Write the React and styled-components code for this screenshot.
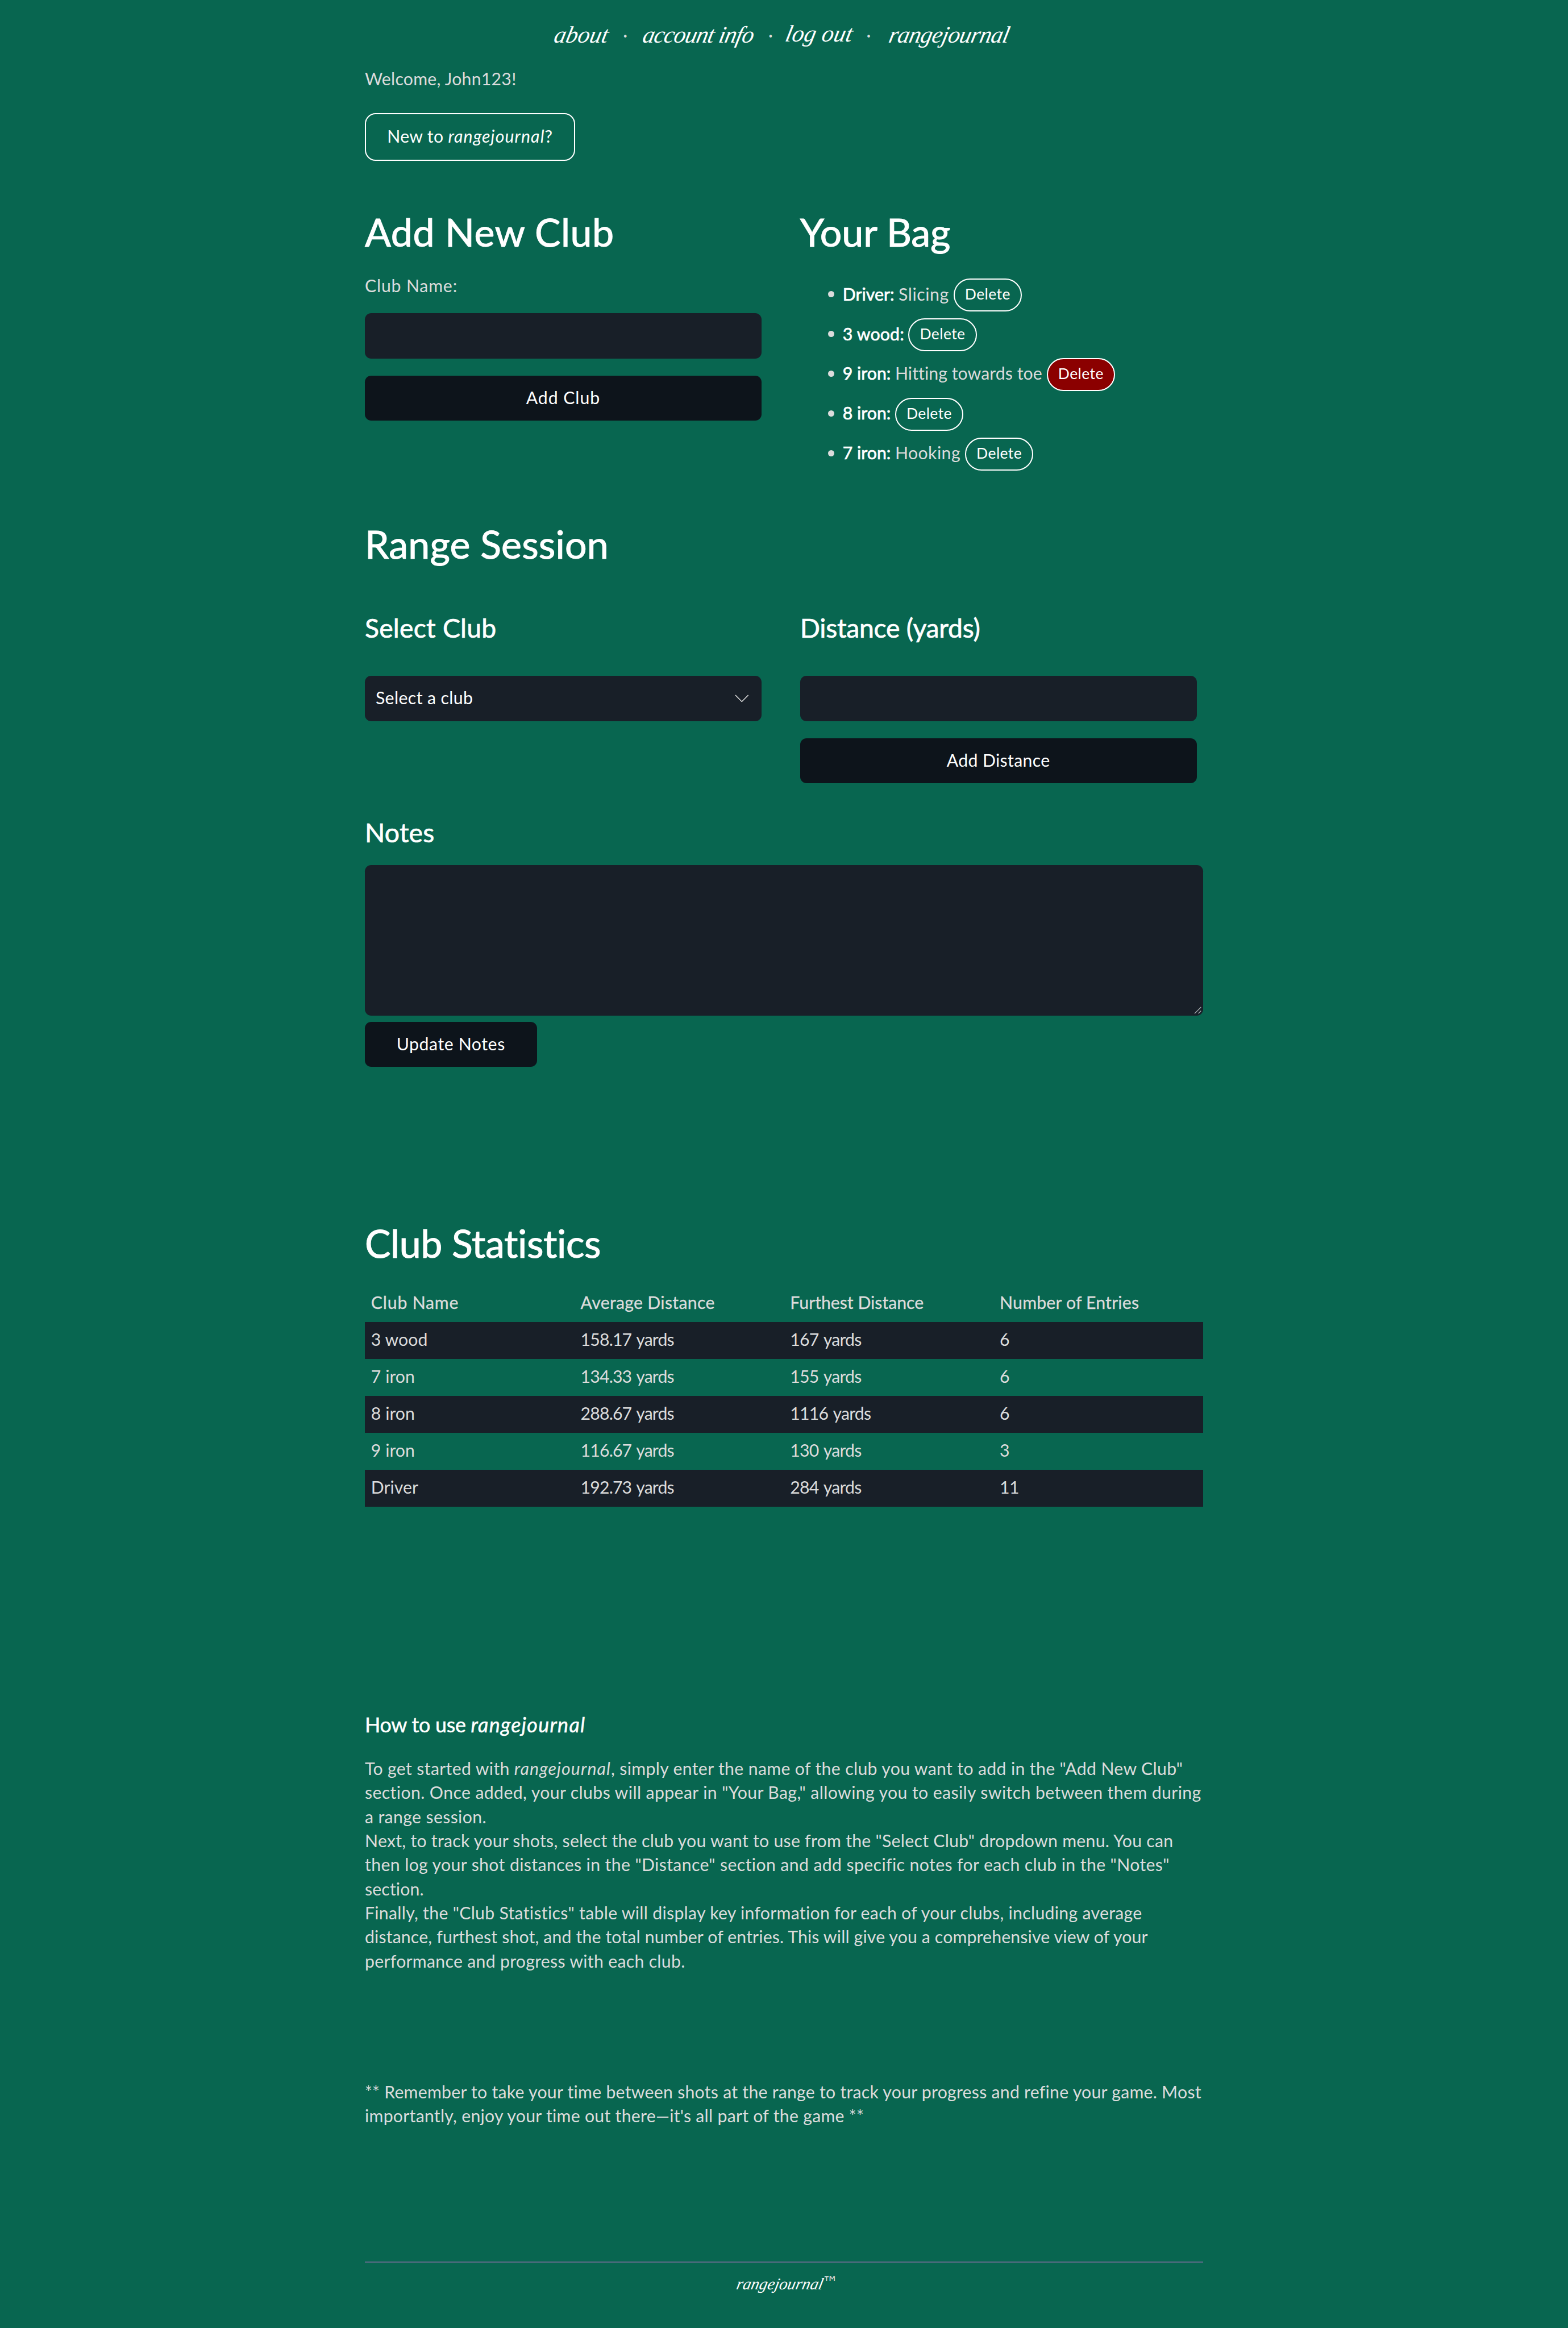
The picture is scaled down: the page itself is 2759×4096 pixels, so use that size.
import React from "react";
import styled, { createGlobalStyle, css } from "styled-components";

/* Design units are scaled to the page's pixel grid. */
const SCALE = 2759 / 2918;
const u = (n) => `${+(n * SCALE).toFixed(3)}px`;

const c = {
  page: "#086650",
  text: "#dcdcdc",
  white: "#ffffff",
  field: "#181f28",
  button: "#0d141b",
  danger: "#8b0000",
  rule: "#5d6b89",
};

const sans = `Lato, "Open Sans", sans-serif`;
const script = `"Snell Roundhand", "Liberation Serif", serif`;

const Global = createGlobalStyle`
  *, *::before, *::after { box-sizing: border-box; }
  html, body { margin: 0; padding: 0; background: ${c.page}; }
  body {
    color: ${c.text};
    font-family: ${sans};
    font-size: ${u(32)};
    line-height: ${u(48)};
    overflow: hidden;
  }
`;

const tracking = css`
  letter-spacing: ${(p) => p.$t || 0}em;
  white-space: nowrap;
`;

const Page = styled.div`
  height: ${u(4332)};
  display: flex;
  flex-direction: column;
  align-items: center;
`;

const Nav = styled.nav`
  display: flex;
  align-items: center;
  height: ${u(48)};
  margin-top: ${u(41)};
  padding-right: ${u(3)};
`;

const NavLink = styled.a`
  ${tracking}
  width: ${(p) => u(p.$w)};
  color: ${c.white};
  font-family: ${script};
  font-style: italic;
  font-size: ${u(44)};
  line-height: ${u(48)};
  text-decoration: none;
  transform-origin: 0 80%;
  transform: translateY(${(p) => u(p.$lift ? -2 : 0)}) skewX(-12deg);
`;

const NavDot = styled.span`
  width: ${(p) => u(p.$w)};
  padding-right: ${(p) => u(Math.max(0, p.$w - 56))};
  text-align: center;
`;

const Main = styled.main`
  width: ${u(1560)};
  display: flex;
  flex-direction: column;
  align-items: flex-start;
`;

const Em = styled.em`
  letter-spacing: 0.036em;
`;

const Welcome = styled.p`
  ${tracking}
  margin: ${u(34)} 0 0;
`;

const HelpButton = styled.button`
  ${tracking}
  width: ${u(391)};
  height: ${u(88)};
  margin-top: ${u(40)};
  padding: 0 0 ${u(2.4)};
  border: 2px solid ${c.white};
  border-radius: ${u(20)};
  background: transparent;
  color: ${c.white};
  font: inherit;
`;

const Columns = styled.div`
  display: grid;
  grid-template-columns: ${u(738)} ${u(738)};
  column-gap: ${u(72)};
  margin-top: ${(p) => u(p.$mt)};
`;

const Column = styled.section`
  display: flex;
  flex-direction: column;
`;

const H1 = styled.h1`
  ${tracking}
  margin: ${(p) => u(p.$mt || 0)} 0 0;
  color: ${c.white};
  font-weight: 400;
  font-size: ${u(72)};
  line-height: ${u(80)};
  -webkit-text-stroke: 1px ${c.white};
`;

const H2 = styled.h2`
  ${tracking}
  margin: ${(p) => u(p.$mt || 0)} 0 0;
  color: ${c.white};
  font-weight: 400;
  font-size: ${u(49)};
  line-height: ${u(60)};
  -webkit-text-stroke: 0.7px ${c.white};
`;

const H3 = styled.h3`
  ${tracking}
  margin: ${(p) => u(p.$mt || 0)} 0 0;
  color: ${c.white};
  font-weight: 400;
  font-size: ${u(38)};
  line-height: ${u(48)};
  -webkit-text-stroke: 0.5px ${c.white};
`;

const Label = styled.label`
  ${tracking}
  margin-top: ${u(36.2)};
`;

const Input = styled.input`
  width: 100%;
  height: ${u(84)};
  margin-top: ${(p) => u(p.$mt)};
  padding: 0 ${u(20)};
  border: 0;
  border-radius: ${u(12)};
  background: ${c.field};
  color: ${c.white};
  font: inherit;
`;

const SolidButton = styled.button`
  width: ${(p) => (p.$w ? u(p.$w) : "100%")};
  height: ${u(84)};
  margin-top: ${(p) => u(p.$mt)};
  padding: 0 0 ${u(2.6)};
  border: 0;
  border-radius: ${u(12)};
  background: ${c.button};
  color: ${c.white};
  font: inherit;
  ${tracking}
`;

const Select = styled.div`
  ${tracking}
  display: flex;
  align-items: center;
  justify-content: space-between;
  height: ${u(84)};
  margin-top: ${u(60)};
  padding: 0 ${u(24)} 0 ${u(20)};
  border-radius: ${u(12)};
  background: ${c.field};
  color: ${c.white};
`;

const SelectText = styled.span`
  padding-bottom: ${u(2.6)};
`;

const Chevron = styled.svg`
  width: ${u(26)};
  height: ${u(15)};
  fill: none;
  stroke: ${c.text};
  stroke-width: 1.7;
`;

const Bag = styled.ul`
  list-style: none;
  margin: ${u(41)} 0 0;
  padding: 0 0 0 ${u(52)};
`;

const BagItem = styled.li`
  display: flex;
  align-items: center;
  height: ${u(74)};
`;

const Bullet = styled.span`
  width: ${u(11.5)};
  height: ${u(11.5)};
  margin: 0 ${u(15.8)} ${u(3.4)} 0;
  border-radius: 50%;
  background: ${c.text};
`;

const ClubLabel = styled.strong`
  ${tracking}
  margin-right: ${u(8)};
  padding-bottom: ${u(4)};
  color: ${c.white};
  font-weight: 400;
  -webkit-text-stroke: 0.7px ${c.white};
`;

const ClubNote = styled.span`
  ${tracking}
  margin-right: ${u(8.5)};
  padding-bottom: ${u(4)};
`;

const DeleteButton = styled.button`
  width: ${u(127)};
  height: ${u(62)};
  padding: 0 0 ${u(2)};
  border: 2px solid ${c.white};
  border-radius: ${u(31)};
  background: ${(p) => (p.$danger ? c.danger : "transparent")};
  color: ${c.white};
  font: inherit;
  font-size: ${u(28)};
  line-height: ${u(40)};
  letter-spacing: 0.016em;
`;

const NotesWrap = styled.div`
  position: relative;
  width: 100%;
  height: ${u(280)};
  margin-top: ${u(31.3)};
`;

const NotesField = styled.textarea`
  display: block;
  width: 100%;
  height: 100%;
  border: 0;
  border-radius: ${u(12)};
  background: ${c.field};
  color: ${c.white};
  resize: none;
`;

const Grip = styled.svg`
  position: absolute;
  right: ${u(3)};
  bottom: ${u(3)};
  width: ${u(14)};
  height: ${u(14)};
  stroke: #a9adb1;
  stroke-width: 1.4;
`;

const Table = styled.div`
  width: 100%;
  margin-top: ${u(37.9)};
`;

const Row = styled.div`
  display: grid;
  grid-template-columns: repeat(4, 1fr);
  align-items: center;
  height: ${u(68.8)};
  background: ${(p) => (p.$striped ? c.field : "transparent")};
  -webkit-text-stroke: ${(p) => (p.$head ? `0.3px ${c.text}` : "0")};
`;

const Cell = styled.span`
  ${tracking}
  padding: 0 ${u(11.5)} ${u(2.8)};
  word-spacing: ${(p) => (p.$numeric ? "0.06em" : "normal")};
`;

const Copy = styled.p`
  margin: ${(p) => u(p.$mt)} 0 0;
  line-height: ${u(44.8)};
`;

const Line = styled.span`
  ${tracking}
  display: block;
`;

const Footer = styled.footer`
  width: ${u(1560)};
  margin-top: auto;
  height: ${u(124)};
  border-top: 2px solid ${c.rule};
  display: flex;
  justify-content: center;
  padding-top: ${u(20)};
`;

const Brand = styled.span`
  width: ${u(172)};
  color: ${c.white};
  font-family: ${script};
  font-style: italic;
  font-size: ${u(30.5)};
  line-height: ${u(40)};
  white-space: nowrap;
  transform-origin: 0 80%;
  transform: skewX(-12deg);
`;

const Trade = styled.span`
  width: ${u(30)};
  font-family: "DejaVu Sans", sans-serif;
  font-size: ${u(30)};
  line-height: ${u(37)};
`;

const clubs = [
  { name: "Driver:", note: "Slicing", t: 0, nt: 0.018 },
  { name: "3 wood:", t: 0.005 },
  { name: "9 iron:", note: "Hitting towards toe", t: 0, nt: 0.0017, danger: true },
  { name: "8 iron:", t: 0 },
  { name: "7 iron:", note: "Hooking", t: 0, nt: 0.014 },
];

const headers = [
  ["Club Name", 0.0256],
  ["Average Distance", 0.0096],
  ["Furthest Distance", -0.0006],
  ["Number of Entries", 0.0058],
];

const stats = [
  ["3 wood", "158.17 yards", "167 yards", "6"],
  ["7 iron", "134.33 yards", "155 yards", "6"],
  ["8 iron", "288.67 yards", "1116 yards", "6"],
  ["9 iron", "116.67 yards", "130 yards", "3"],
  ["Driver", "192.73 yards", "284 yards", "11"],
];
const statTracking = [0, -0.0285, -0.026, -0.02];

const guide = [
  [<>To get started with <Em>rangejournal</Em>, simply enter the name of the club you want to add in the "Add New Club"</>, 0.0108],
  ['section. Once added, your clubs will appear in "Your Bag," allowing you to easily switch between them during', 0.0122],
  ["a range session.", 0.0115],
  ['Next, to track your shots, select the club you want to use from the "Select Club" dropdown menu. You can', 0.0083],
  ['then log your shot distances in the "Distance" section and add specific notes for each club in the "Notes"', 0.012],
  ["section.", 0.004],
  ['Finally, the "Club Statistics" table will display key information for each of your clubs, including average', 0.0093],
  ["distance, furthest shot, and the total number of entries. This will give you a comprehensive view of your", 0.0044],
  ["performance and progress with each club.", 0.0092],
];

const reminder = [
  ["** Remember to take your time between shots at the range to track your progress and refine your game. Most", 0.008],
  ["importantly, enjoy your time out there—it's all part of the game **", 0.0085],
];

const Lines = ({ items }) =>
  items.map(([text, t], i) => (
    <Line key={i} $t={t}>
      {text}
    </Line>
  ));

export default function App() {
  return (
    <Page>
      <Global />
      <Nav>
        <NavLink $w={106} $t={0}>about</NavLink>
        <NavDot $w={59}>·</NavDot>
        <NavLink $w={214} $t={-0.025}>account info</NavLink>
        <NavDot $w={51}>·</NavDot>
        <NavLink $w={129} $t={0.003} $lift>log out</NavLink>
        <NavDot $w={63}>·</NavDot>
        <NavLink $w={234} $t={-0.018}>rangejournal</NavLink>
      </Nav>

      <Main>
        <Welcome $t={0.0077}>Welcome, John123!</Welcome>
        <HelpButton $t={0.01}>
          New to <Em>rangejournal</Em>?
        </HelpButton>

        <Columns $mt={92.1}>
          <Column>
            <H1 $t={0.0074}>Add New Club</H1>
            <Label $t={0.0265}>Club Name:</Label>
            <Input $mt={27.7} />
            <SolidButton $mt={32} $t={0.0305}>Add Club</SolidButton>
          </Column>
          <Column>
            <H1 $t={-0.0008}>Your Bag</H1>
            <Bag>
              {clubs.map((club) => (
                <BagItem key={club.name}>
                  <Bullet />
                  <ClubLabel $t={club.t}>{club.name}</ClubLabel>
                  {club.note && <ClubNote $t={club.nt}>{club.note}</ClubNote>}
                  <DeleteButton $danger={club.danger}>Delete</DeleteButton>
                </BagItem>
              ))}
            </Bag>
          </Column>
        </Columns>

        <H1 $mt={89.5} $t={0.0025}>Range Session</H1>
        <Columns $mt={86.4}>
          <Column>
            <H2 $t={0.0045}>Select Club</H2>
            <Select $t={0.0125}>
              <SelectText>Select a club</SelectText>
              <Chevron viewBox="0 0 26 15">
                <path d="M1 1 L13 13.2 L25 1" />
              </Chevron>
            </Select>
          </Column>
          <Column>
            <H2 $t={-0.006}>Distance (yards)</H2>
            <Input $mt={60} />
            <SolidButton $mt={32} $t={0.011}>Add Distance</SolidButton>
          </Column>
        </Columns>

        <H2 $mt={60.5} $t={0.004}>Notes</H2>
        <NotesWrap>
          <NotesField />
          <Grip viewBox="0 0 14 14">
            <path d="M1 13 L13 1 M8 13 L13 8" />
          </Grip>
        </NotesWrap>
        <SolidButton $w={320} $mt={12} $t={0.0185}>Update Notes</SolidButton>

        <H1 $mt={287.3} $t={-0.0058}>Club Statistics</H1>
        <Table>
          <Row $head>
            {headers.map(([h, t]) => (
              <Cell key={h} $t={t}>{h}</Cell>
            ))}
          </Row>
          {stats.map((row, i) => (
            <Row key={row[0]} $striped={i % 2 === 0}>
              {row.map((value, j) => (
                <Cell key={j} $t={statTracking[j]} $numeric={j > 0}>{value}</Cell>
              ))}
            </Row>
          ))}
        </Table>

        <H3 $mt={382} $t={-0.008}>
          How to use <Em>rangejournal</Em>
        </H3>
        <Copy $mt={34.4}>
          <Lines items={guide} />
        </Copy>
        <Copy $mt={198.5}>
          <Lines items={reminder} />
        </Copy>
      </Main>

      <Footer>
        <Brand>rangejournal</Brand>
        <Trade>™</Trade>
      </Footer>
    </Page>
  );
}
